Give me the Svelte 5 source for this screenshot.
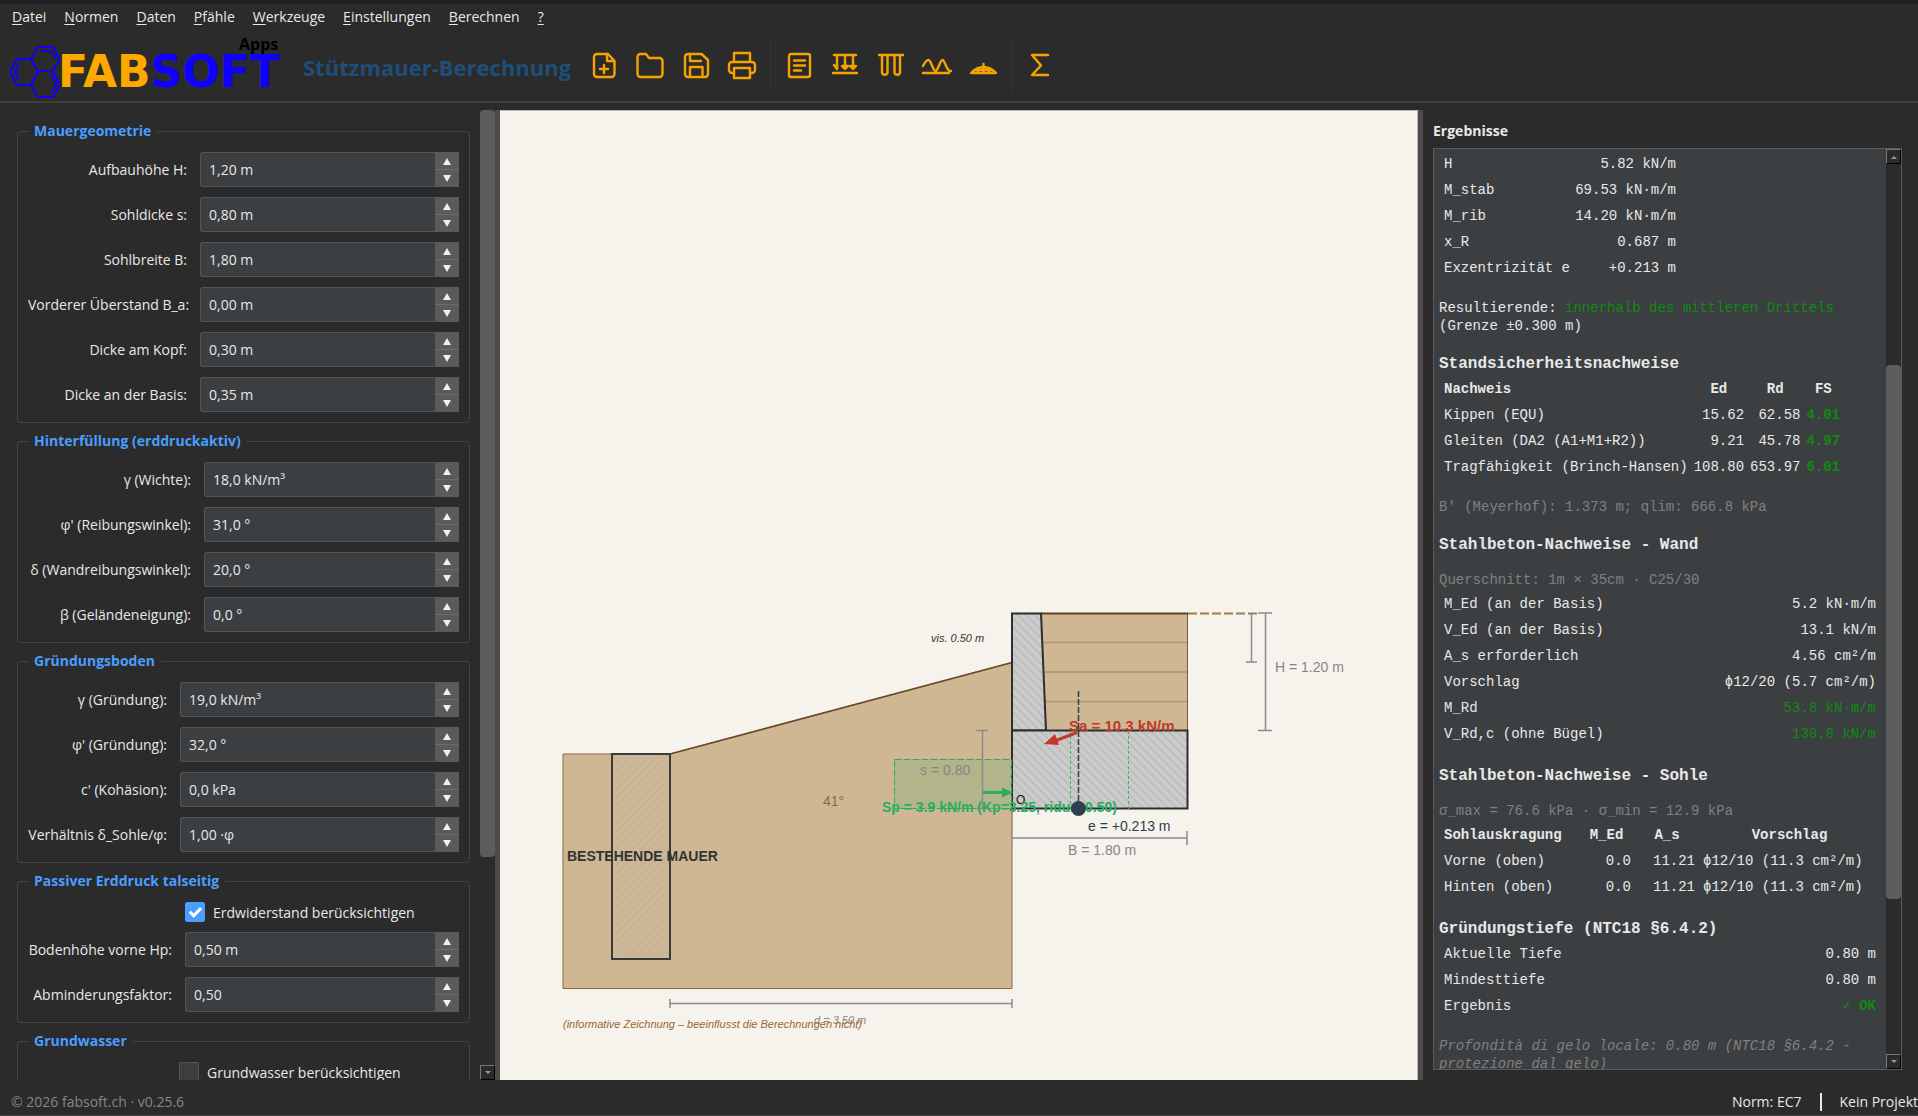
<script>
  const menus = ['Datei', 'Normen', 'Daten', 'Pfähle', 'Werkzeuge', 'Einstellungen', 'Berechnen', '?'];

  let groups = [
    {
      title: 'Mauergeometrie',
      labelWidth: 159,
      fields: [
        { id: 'aufbauhoehe', label: 'Aufbauhöhe H:', value: 1.2, digits: 2, step: 0.05, unit: ' m' },
        { id: 'sohldicke', label: 'Sohldicke s:', value: 0.8, digits: 2, step: 0.05, unit: ' m' },
        { id: 'sohlbreite', label: 'Sohlbreite B:', value: 1.8, digits: 2, step: 0.05, unit: ' m' },
        { id: 'ueberstand', label: 'Vorderer Überstand B_a:', value: 0, digits: 2, step: 0.05, unit: ' m' },
        { id: 'dicke_kopf', label: 'Dicke am Kopf:', value: 0.3, digits: 2, step: 0.05, unit: ' m' },
        { id: 'dicke_basis', label: 'Dicke an der Basis:', value: 0.35, digits: 2, step: 0.05, unit: ' m' }
      ]
    },
    {
      title: 'Hinterfüllung (erddruckaktiv)',
      labelWidth: 163,
      fields: [
        { id: 'gamma', label: 'γ (Wichte):', value: 18, digits: 1, step: 0.5, unit: ' kN/m³' },
        { id: 'phi', label: "φ' (Reibungswinkel):", value: 31, digits: 1, step: 0.5, unit: ' °' },
        { id: 'delta', label: 'δ (Wandreibungswinkel):', value: 20, digits: 1, step: 0.5, unit: ' °' },
        { id: 'beta', label: 'β (Geländeneigung):', value: 0, digits: 1, step: 0.5, unit: ' °' }
      ]
    },
    {
      title: 'Gründungsboden',
      labelWidth: 139,
      fields: [
        { id: 'gamma_g', label: 'γ (Gründung):', value: 19, digits: 1, step: 0.5, unit: ' kN/m³' },
        { id: 'phi_g', label: "φ' (Gründung):", value: 32, digits: 1, step: 0.5, unit: ' °' },
        { id: 'kohaesion', label: "c' (Kohäsion):", value: 0, digits: 1, step: 0.5, unit: ' kPa' },
        { id: 'delta_sohle', label: 'Verhältnis δ_Sohle/φ:', value: 1, digits: 2, step: 0.05, unit: ' ·φ' }
      ]
    },
    {
      title: 'Passiver Erddruck talseitig',
      labelWidth: 144,
      check: { id: 'erdwiderstand', label: 'Erdwiderstand berücksichtigen', checked: true },
      fields: [
        { id: 'bodenhoehe', label: 'Bodenhöhe vorne Hp:', value: 0.5, digits: 2, step: 0.05, unit: ' m' },
        { id: 'abminderung', label: 'Abminderungsfaktor:', value: 0.5, digits: 2, step: 0.05, unit: '' }
      ]
    },
    {
      title: 'Grundwasser',
      labelWidth: 138,
      check: { id: 'grundwasser', label: 'Grundwasser berücksichtigen', checked: false },
      fields: []
    }
  ];

  const kraefte = [
    ['H', '5.82 kN/m'],
    ['M_stab', '69.53 kN·m/m'],
    ['M_rib', '14.20 kN·m/m'],
    ['x_R', '0.687 m'],
    ['Exzentrizität e', '+0.213 m']
  ];

  const nachweise = [
    ['Kippen (EQU)', '15.62', '62.58', '4.01'],
    ['Gleiten (DA2 (A1+M1+R2))', '9.21', '45.78', '4.97'],
    ['Tragfähigkeit (Brinch-Hansen)', '108.80', '653.97', '6.01']
  ];

  const wand = [
    { name: 'M_Ed (an der Basis)', value: '5.2 kN·m/m' },
    { name: 'V_Ed (an der Basis)', value: '13.1 kN/m' },
    { name: 'A_s erforderlich', value: '4.56 cm²/m' },
    { name: 'Vorschlag', value: 'ϕ12/20 (5.7 cm²/m)' },
    { name: 'M_Rd', value: '53.8 kN·m/m', ok: true },
    { name: 'V_Rd,c (ohne Bügel)', value: '130.8 kN/m', ok: true }
  ];

  const sohle = [
    ['Vorne (oben)', '0.0', '11.21', 'ϕ12/10 (11.3 cm²/m)'],
    ['Hinten (oben)', '0.0', '11.21', 'ϕ12/10 (11.3 cm²/m)']
  ];

  function format(field) {
    return field.value.toFixed(field.digits).replace('.', ',') + field.unit;
  }

  function stepField(field, direction) {
    field.value = Math.max(0, field.value + direction * field.step);
    groups = groups;
  }

  function setField(field, text) {
    const value = parseFloat(text.replace(',', '.'));
    if (!isNaN(value)) field.value = value;
    groups = groups;
  }
</script>

<div class="app">
  <nav class="menubar">
    {#each menus as menu}
      <button type="button"><u>{menu[0]}</u>{menu.slice(1)}</button>
    {/each}
  </nav>

  <header class="toolbar">
    <svg class="logo" width="282" height="66" viewBox="0 0 282 66" role="img" aria-label="FABSOFT Apps">
      <g fill="none" stroke="#1400f5" stroke-width="2" stroke-linejoin="round">
        <path d="M30 14h15l7 12-7 12H30l-7-12z" />
        <path d="M9 26h14l7 12-7 14H9L2 39z" />
        <path d="M30 38h15l7 14-7 12H30l-7-12z" />
        <path d="M33 18h10l5 8M11 30l-4 9 4 8M43 42l5 10-5 8" />
      </g>
      <text class="logo-name" x="50" y="54"><tspan fill="#ffa800">FAB</tspan><tspan fill="#0f00ff">SOFT</tspan></text>
      <text class="logo-apps" x="231" y="17">Apps</text>
    </svg>
    <h1>Stützmauer-Berechnung</h1>

    <div class="tools">
      <button type="button" aria-label="Neu">
        <svg viewBox="0 0 32 32">
          <path d="M20 5H9a3 3 0 0 0-3 3v17a3 3 0 0 0 3 3h14.500a3 3 0 0 0 3-3V12z" />
          <path d="M19 5v7h7M16 16v8M12 20h8" />
        </svg>
      </button>
      <button type="button" aria-label="Öffnen">
        <svg viewBox="0 0 32 32">
          <path d="M3.500 8v17a3 3 0 0 0 3 3h19a3 3 0 0 0 3-3V12a3 3 0 0 0-3-3H15l-3-4H6.500a3 3 0 0 0-3 3z" />
        </svg>
      </button>
      <button type="button" aria-label="Speichern">
        <svg viewBox="0 0 32 32">
          <path d="M21.500 5H8a3 3 0 0 0-3 3v17a3 3 0 0 0 3 3h17a3 3 0 0 0 3-3V11z" />
          <path d="M10 5v7h11M10 28V18h12.500v10" />
        </svg>
      </button>
      <button type="button" aria-label="Drucken">
        <svg viewBox="0 0 32 32">
          <path d="M8 13V4h16v9M8 24H6a3 3 0 0 1-3-3v-5a3 3 0 0 1 3-3h20a3 3 0 0 1 3 3v5a3 3 0 0 1-3 3h-2" />
          <path d="M8 19h16v10H8z" />
        </svg>
      </button>
      <span class="tool-sep"></span>
      <button type="button" aria-label="Bericht">
        <svg viewBox="0 0 32 32">
          <rect x="6" y="5" width="21" height="23" rx="2" />
          <path d="M11 11.500h11M11 16.500h11M11 21.500h7" />
        </svg>
      </button>
      <button type="button" aria-label="Lasten">
        <svg viewBox="0 0 32 32">
          <path d="M5 6h22M4 24h24M8 6v13M16 6v13M24 6v13" />
          <path d="M5 16l3 4V16M13 17h6l-3 3zM21 17h6l-3 3z" />
        </svg>
      </button>
      <button type="button" aria-label="Pfähle">
        <svg viewBox="0 0 32 32">
          <path d="M4 6h24M7 6v18a3 3 0 0 0 5.500 0V6M19.500 6v18a3 3 0 0 0 5.500 0V6" />
        </svg>
      </button>
      <button type="button" aria-label="Gelände">
        <svg viewBox="0 0 32 32">
          <path d="M2 17c2-4 4-6 5.500-6C10 11 12 22 14.500 22S19 11 21.500 11s4 11 7.500 11h1M2 24h26" />
        </svg>
      </button>
      <button type="button" aria-label="Bruchkreis">
        <svg viewBox="0 0 32 32">
          <path d="M4 24h25c-4-4-8-6-12.500-6S8 20 4 24zM8 21h17M11 19v5M16.500 15v9M22 19v5" />
        </svg>
      </button>
      <span class="tool-sep"></span>
      <button type="button" aria-label="Berechnen">
        <svg viewBox="0 0 32 32">
          <path d="M24 6H8l9 10.500L8 26h16" />
        </svg>
      </button>
    </div>
  </header>

  <main>
    <section class="inputs">
      <form on:submit|preventDefault>
        {#each groups as group}
          <fieldset>
            <legend>{group.title}</legend>
            <div class="fields" style="--label-width: {group.labelWidth}px">
              {#if group.check}
                <div class="check">
                  <input type="checkbox" id={group.check.id} bind:checked={group.check.checked} />
                  <label for={group.check.id}>{group.check.label}</label>
                </div>
              {/if}
              {#each group.fields as field}
                <label class="field-label" for={field.id}>{field.label}</label>
                <div class="spin">
                  <input
                    type="text"
                    id={field.id}
                    value={format(field)}
                    on:change={(e) => setField(field, e.target.value)}
                  />
                  <div class="spin-buttons">
                    <button type="button" aria-label="Mehr" on:click={() => stepField(field, 1)}>
                      <svg viewBox="0 0 10 8"><path d="M5 1l4 7H1z" /></svg>
                    </button>
                    <button type="button" aria-label="Weniger" on:click={() => stepField(field, -1)}>
                      <svg viewBox="0 0 10 8"><path d="M5 7l4-7H1z" /></svg>
                    </button>
                  </div>
                </div>
              {/each}
            </div>
          </fieldset>
        {/each}
      </form>
      <div class="scrollbar">
        <div class="thumb thumb-inputs"></div>
        <button type="button" class="arrow" aria-label="Nach unten">
          <svg viewBox="0 0 6 4"><path d="M0 0h6L3 3z" /></svg>
        </button>
      </div>
    </section>

    <div class="splitter"></div>

    <section class="drawing">
      <svg viewBox="-1 0 917 969" role="img" aria-label="Schnitt der Stützmauer">
        <defs>
          <pattern id="beton" width="6" height="6" patternUnits="userSpaceOnUse" patternTransform="rotate(-45)">
            <rect width="6" height="6" fill="#cbcbcb" />
            <path d="M3 0v6" stroke="#b8b8b8" stroke-width="1.500" />
          </pattern>
          <pattern id="bestand" width="6" height="6" patternUnits="userSpaceOnUse" patternTransform="rotate(45)">
            <path d="M3 0v6" stroke="#b8b0a5" stroke-width="1" />
          </pattern>
        </defs>

        <!-- Boden talseitig und bestehende Mauer -->
        <path d="M62 643h107l342-91.500V877.500H62z" fill="#ceb792" stroke="#8b683f" />
        <path d="M169 643l342-91.500" stroke="#6b4a2b" stroke-width="1.500" />
        <rect x="111" y="643" width="58" height="205" fill="url(#bestand)" stroke="#3a3a3a" stroke-width="2" />

        <!-- Hinterfüllung -->
        <path d="M540 502.500h146.500v117H545z" fill="#ceb792" stroke="#7d5a35" />
        <path d="M541 531.500h145M542 561h144M544 590.500h142" stroke="#b3946b" stroke-width="1.500" />
        <path d="M540 502.500h147" stroke="#5c4326" stroke-width="2" />
        <path d="M687 502.500h71" stroke="#a07b4c" stroke-width="2" stroke-dasharray="9 3" />

        <!-- Wand und Sohle -->
        <path d="M511 502.500h29l5 117h-34z" fill="url(#beton)" stroke="#2e2e2e" stroke-width="2" />
        <rect x="511" y="619.500" width="175.500" height="78" fill="url(#beton)" stroke="#2e2e2e" stroke-width="2" />
        <path d="M569.500 620v78M627.500 620v78" stroke="#4caf50" stroke-dasharray="3 2" />

        <!-- Erdwiderstand -->
        <rect x="393.500" y="648.500" width="117" height="49" fill="#27ae60" fill-opacity="0.17" stroke="#27ae60" stroke-dasharray="7 2" />
        <path d="M481 681.500h22" stroke="#27ae60" stroke-width="3" />
        <path d="M512 681.500l-11-5v10z" fill="#27ae60" />

        <!-- Bemaßung -->
        <g stroke="#8c8c8c" stroke-width="1.500">
          <path d="M481.500 619.500v78M475 619.500h12M475 697.500h12" />
          <path d="M764.500 502v117.500M757 502h14M757 619.500h14" />
          <path d="M750.500 502v49M745 551h11" />
          <path d="M511 727h175M686 720v14" />
          <path d="M169 892.500h342M169 888v9M511 888v9" />
          <path d="M487 697.500h24M511 697.500v36" stroke-width="1" stroke-dasharray="2 2" />
        </g>
        <g class="dim">
          <text x="774" y="561">H = 1.20 m</text>
          <text x="567" y="744">B = 1.80 m</text>
          <text x="419" y="664">s = 0.80</text>
        </g>
        <text x="322" y="695" fill="#8b6b3d">41°</text>
        <text class="italic" x="430" y="531" fill="#333333">vis. 0.50 m</text>
        <text class="italic" x="313" y="913" fill="#858585">d = 3.50 m</text>
        <text class="italic" x="62" y="917" fill="#996633">(informative Zeichnung – beeinflusst die Berechnungen nicht)</text>
        <text class="bold" x="66" y="750" fill="#333333">BESTEHENDE MAUER</text>
        <text class="origin" x="515" y="693">O</text>

        <!-- Resultierende und Kräfte -->
        <text class="bold" x="381" y="701" fill="#27ae60">Sp = 3.9 kN/m (Kp=3.25, riduz. 0.50)</text>
        <path d="M576 621.500l-21 8" stroke="#c0392b" stroke-width="3" />
        <path d="M543 633l11-10 4 11z" fill="#c0392b" />
        <text class="force" x="568" y="620" fill="#c0392b">Sa = 10.3 kN/m</text>
        <path d="M577.500 580v118" stroke="#2c3e50" stroke-width="1.500" stroke-dasharray="6 2" />
        <circle cx="577.500" cy="697.500" r="7.500" fill="#2c3e50" />
        <text x="587" y="720" fill="#2c3e50">e = +0.213 m</text>
      </svg>
    </section>

    <div class="splitter"></div>

    <section class="results">
      <h2>Ergebnisse</h2>
      <div class="report">
        <div class="report-body">
          <table class="kraefte">
            <tbody>
              {#each kraefte as row}
                <tr><td>{row[0]}</td><td class="num">{row[1]}</td></tr>
              {/each}
            </tbody>
          </table>
          <p>Resultierende: <span class="ok">innerhalb des mittleren Drittels</span> (Grenze ±0.300 m)</p>

          <h3>Standsicherheitsnachweise</h3>
          <table class="nachweise">
            <thead>
              <tr><th class="first">Nachweis</th><th>Ed</th><th>Rd</th><th>FS</th></tr>
            </thead>
            <tbody>
              {#each nachweise as row}
                <tr>
                  <td>{row[0]}</td>
                  <td class="num">{row[1]}</td>
                  <td class="num">{row[2]}</td>
                  <td class="num ok"><b>{row[3]}</b></td>
                </tr>
              {/each}
            </tbody>
          </table>
          <p class="note">B' (Meyerhof): 1.373 m; qlim: 666.8 kPa</p>

          <h3>Stahlbeton-Nachweise - Wand</h3>
          <p class="note intro">Querschnitt: 1m × 35cm · C25/30</p>
          <table>
            <tbody>
              {#each wand as row}
                <tr><td>{row.name}</td><td class="num" class:ok={row.ok}>{row.value}</td></tr>
              {/each}
            </tbody>
          </table>

          <h3>Stahlbeton-Nachweise - Sohle</h3>
          <p class="note intro">σ_max = 76.6 kPa · σ_min = 12.9 kPa</p>
          <table class="sohle">
            <thead>
              <tr><th class="first">Sohlauskragung</th><th>M_Ed</th><th>A_s</th><th>Vorschlag</th></tr>
            </thead>
            <tbody>
              {#each sohle as row}
                <tr>
                  <td>{row[0]}</td>
                  <td class="num">{row[1]}</td>
                  <td class="num">{row[2]}</td>
                  <td>{row[3]}</td>
                </tr>
              {/each}
            </tbody>
          </table>

          <h3>Gründungstiefe (NTC18 §6.4.2)</h3>
          <table>
            <tbody>
              <tr><td>Aktuelle Tiefe</td><td class="num">0.80 m</td></tr>
              <tr><td>Mindesttiefe</td><td class="num">0.80 m</td></tr>
              <tr><td>Ergebnis</td><td class="num ok"><b>✓ OK</b></td></tr>
            </tbody>
          </table>
          <p class="note frost">Profondità di gelo locale: 0.80 m (NTC18 §6.4.2 - protezione dal gelo)</p>
        </div>
        <div class="scrollbar">
          <button type="button" class="arrow" aria-label="Nach oben">
            <svg viewBox="0 0 6 4"><path d="M0 4h6L3 1z" /></svg>
          </button>
          <div class="thumb thumb-report"></div>
          <button type="button" class="arrow" aria-label="Nach unten">
            <svg viewBox="0 0 6 4"><path d="M0 0h6L3 3z" /></svg>
          </button>
        </div>
      </div>
    </section>
  </main>

  <footer>
    <span class="copyright">© 2026 fabsoft.ch · v0.25.6</span>
    <span>Norm: EC7</span>
    <span class="status-sep"></span>
    <span>Kein Projekt</span>
  </footer>
</div>

<style>
  :global(body) {
    background: #2b2b2b;
  }

  .app {
    display: flex;
    flex-direction: column;
    height: 100vh;
    box-sizing: border-box;
    border-top: 4px solid #202124;
    border-bottom: 1px solid #444444;
    overflow: hidden;
    background: #2b2b2b;
    color: #e8e8e8;
    font-family: 'Segoe UI', 'Open Sans', 'Noto Sans', sans-serif;
    font-size: 14px;
  }

  button {
    margin: 0;
    padding: 0;
    border: none;
    background: none;
    color: inherit;
    font: inherit;
  }

  /* Menü */
  .menubar {
    display: flex;
    gap: 18px;
    padding: 3px 12px;
  }

  .menubar button {
    line-height: 20px;
  }

  .menubar u {
    text-underline-offset: 2px;
  }

  /* Werkzeugleiste */
  .toolbar {
    display: flex;
    align-items: center;
    height: 71px;
    padding-left: 8px;
    border-bottom: 2px solid #3d3d3d;
  }

  .logo {
    flex: none;
    overflow: visible;
  }

  .logo-name {
    font-family: 'DejaVu Sans', sans-serif;
    font-size: 44px;
    font-weight: bold;
  }

  .logo-apps {
    font-size: 16px;
    font-weight: bold;
    fill: #000000;
  }

  h1 {
    margin: 0 0 0 13px;
    padding-top: 2px;
    color: #1f4e79;
    font-size: 22px;
    line-height: 32px;
    white-space: nowrap;
  }

  .tools {
    display: flex;
    align-items: center;
    margin: 0 0 2px 10px;
  }

  .tools button {
    width: 46px;
    height: 46px;
    display: grid;
    place-items: center;
  }

  .tools svg {
    width: 32px;
    height: 32px;
    fill: none;
    stroke: #f5a300;
    stroke-width: 2.4;
    stroke-linejoin: round;
    stroke-linecap: round;
  }

  .tool-sep {
    width: 1px;
    height: 58px;
    margin: 0 5px;
    background: #333333;
  }

  main {
    flex: 1;
    min-height: 0;
    display: grid;
    grid-template-columns: 495px 5px minmax(0, 1fr) 5px 495px;
    grid-template-rows: minmax(0, 1fr);
    padding-top: 7px;
  }

  .splitter {
    background: #4b4b4b;
  }

  /* Eingaben */
  .inputs {
    display: flex;
    justify-content: space-between;
    gap: 10px;
    padding-left: 17px;
    overflow: hidden;
  }

  form {
    flex: 1;
    display: flex;
    flex-direction: column;
    gap: 8px;
    padding-top: 11px;
    overflow: hidden;
  }

  fieldset {
    flex: none;
    margin: 0;
    padding: 11px 10px 10px;
    border: 1px solid #444444;
    border-radius: 4px;
  }

  fieldset:last-child {
    padding-bottom: 40px;
  }

  legend {
    padding: 0 6px;
    color: #4a9eff;
    font-weight: bold;
    line-height: 20px;
  }

  .fields {
    display: grid;
    grid-template-columns: var(--label-width) minmax(0, 1fr);
    gap: 10px 13px;
    align-items: center;
  }

  .field-label {
    text-align: right;
    white-space: nowrap;
  }

  .check {
    grid-column: 2;
    display: flex;
    align-items: center;
    gap: 8px;
    height: 20px;
  }

  .check input {
    appearance: none;
    width: 20px;
    height: 20px;
    margin: 0;
    border: 1px solid #555555;
    border-radius: 2px;
    background: #3c3f41;
    display: grid;
    place-items: center;
  }

  .check input:checked {
    border-color: #4a9eff;
    background: #4a9eff;
  }

  .check input:checked::before {
    content: '';
    width: 4px;
    height: 9px;
    margin-bottom: 3px;
    border: solid #ffffff;
    border-width: 0 3px 3px 0;
    transform: rotate(45deg);
  }

  .spin {
    display: flex;
    height: 35px;
  }

  .spin input {
    flex: 1;
    min-width: 0;
    box-sizing: border-box;
    padding: 0 8px;
    border: 1px solid #555555;
    border-right: none;
    border-radius: 3px 0 0 3px;
    outline: none;
    background: #3c3f41;
    color: inherit;
    font: inherit;
  }

  .spin-buttons {
    display: grid;
    grid-template-rows: 1fr 1fr;
    gap: 1px;
    width: 24px;
    background: #6b6b6b;
  }

  .spin-buttons button {
    display: grid;
    place-items: center;
    background: #5a5a5a;
  }

  .spin-buttons svg {
    width: 10px;
    height: 8px;
    fill: #f0f0f0;
  }

  .scrollbar {
    flex: none;
    display: flex;
    flex-direction: column;
    justify-content: space-between;
    width: 15px;
  }

  .thumb {
    border-radius: 4px;
    background: #5c5c5c;
  }

  .thumb-inputs {
    height: 77%;
  }

  .arrow {
    display: grid;
    place-items: center;
    box-sizing: border-box;
    height: 15px;
    border: 1px solid #777777;
    border-right-color: #000000;
    border-bottom-color: #000000;
  }

  .arrow svg {
    width: 6px;
    height: 4px;
    fill: #999999;
  }

  /* Zeichnung */
  .drawing {
    border-top: 1px solid #bdbab4;
    border-right: 1px solid #bdbab4;
    background: #f6f3ed;
    overflow: hidden;
  }

  .drawing svg {
    display: block;
    width: 100%;
    height: 100%;
    fill: none;
  }

  .drawing text {
    font-family: 'Liberation Sans', Arial, sans-serif;
    font-size: 14px;
  }

  .drawing .dim {
    fill: #858585;
  }

  .drawing .bold {
    font-weight: bold;
  }

  .drawing .force {
    font-size: 15px;
    font-weight: bold;
  }

  .drawing .italic {
    font-size: 11px;
    font-style: italic;
  }

  .drawing .origin {
    font-size: 12px;
    fill: #111111;
  }

  /* Ergebnisse */
  .results {
    display: flex;
    flex-direction: column;
    padding: 11px 16px 10px 10px;
  }

  h2 {
    margin: 0 0 7px;
    font-size: 14px;
    line-height: 20px;
  }

  .report {
    flex: 1;
    min-height: 0;
    display: flex;
    border: 1px solid #5a5a5a;
    background: #3c3f41;
    font-family: Consolas, 'Liberation Mono', monospace;
    line-height: 18px;
  }

  .report-body {
    flex: 1;
    padding: 2px 10px 0 5px;
    overflow: hidden;
  }

  .report .scrollbar {
    background: #2b2b2b;
  }

  .thumb-report {
    height: 58%;
    margin: 201px 0 auto;
  }

  h3 {
    margin: 17px 0 0;
    font-size: 16px;
    line-height: 24px;
  }

  p {
    margin: 18px 0 0;
  }

  .note {
    color: #808080;
  }

  .intro {
    margin: 14px 0 2px;
  }

  .frost {
    font-style: italic;
  }

  .ok {
    color: #0f8a0f;
  }

  table {
    width: calc(100% - 5px);
    margin-left: 5px;
    border-collapse: collapse;
  }

  th,
  td {
    height: 26px;
    padding: 0;
    white-space: nowrap;
    text-align: left;
  }

  th {
    text-align: center;
  }

  .first {
    text-align: left;
  }

  .num {
    text-align: right;
  }

  .kraefte {
    width: 232px;
  }

  .nachweise {
    width: auto;
  }

  .nachweise th + th,
  .nachweise td + td {
    padding-left: 6px;
  }

  .sohle th:nth-child(1) {
    width: 138px;
  }

  .sohle th:nth-child(2) {
    width: 49px;
  }

  .sohle th:nth-child(3) {
    width: 56px;
  }

  .sohle th:nth-child(n + 3),
  .sohle td:nth-child(n + 3) {
    padding-left: 8px;
  }

  /* Statuszeile */
  footer {
    display: flex;
    align-items: center;
    gap: 18px;
    height: 35px;
    padding: 9px 0 0 11px;
    box-sizing: border-box;
    line-height: 20px;
  }

  .copyright {
    flex: 1;
    color: #868686;
  }

  .status-sep {
    width: 2px;
    height: 18px;
    background: #e8e8e8;
  }
</style>
